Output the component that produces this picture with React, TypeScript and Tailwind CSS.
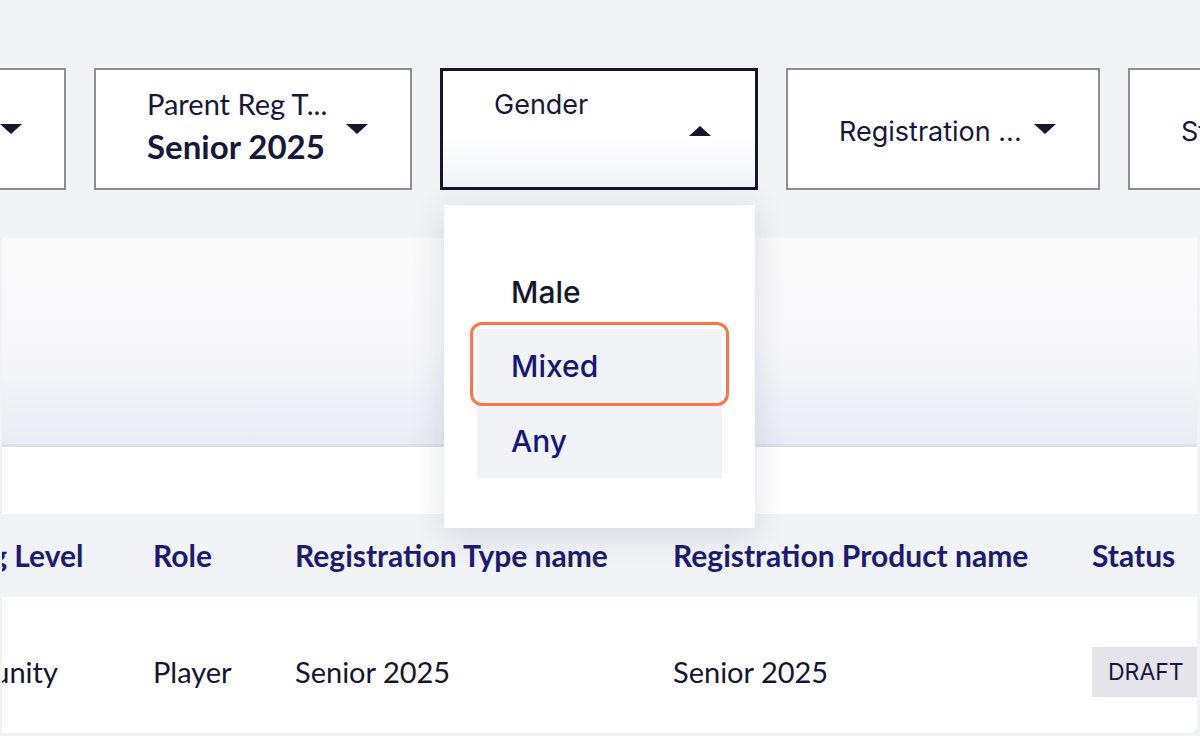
import React from "react";

const lato = { fontFamily: "Lato, 'Liberation Sans', sans-serif" };
const inter = { fontFamily: "Inter, 'Noto Sans', sans-serif" };

const Caret = ({ up = false }: { up?: boolean }) => (
  <svg width="24" height="11" viewBox="0 0 24 11" className="shrink-0">
    {up ? (
      <path d="M1 11 L12 1 L23 11 Z" fill="#15152e" />
    ) : (
      <path d="M1 0 L23 0 L12 10 Z" fill="#15152e" />
    )}
  </svg>
);

const FilterBox = ({
  label,
  value,
  w = "w-[318px]",
}: {
  label: string;
  value?: string;
  w?: string;
}) => (
  <div
    className={`${w} h-[122px] shrink-0 bg-white border-2 border-[#8c8e9a] flex items-center justify-between pl-[51px] pr-[41px]`}
  >
    {value ? (
      <div className="flex flex-col text-[#17173a] whitespace-nowrap" style={lato}>
        <span className="text-[29px] leading-[34px]">{label}</span>
        <span className="text-[33px] leading-[50px] font-bold">{value}</span>
      </div>
    ) : (
      <span className="text-[27px] text-[#17173a] whitespace-nowrap pt-[6px]" style={inter}>
        {label}
      </span>
    )}
    <Caret />
  </div>
);

const cols = "grid grid-cols-[243px_142px_378px_419px_1fr]";

const App = () => {
  return (
    <div className="relative w-[1200px] h-[736px] overflow-hidden bg-[#f2f3f5]">
      {/* Filters */}
      <div className="flex gap-[28px] pt-[68px] ml-[-252px]">
        <FilterBox label="Competition" value="Senior Comp" />
        <FilterBox label="Parent Reg T..." value="Senior 2025" />
        {/* Gender - open */}
        <div className="relative shrink-0">
          <div className="w-[318px] h-[122px] border-[3px] border-[#16162a] bg-gradient-to-b from-white via-white to-[#f3f4f8] flex justify-between pl-[51px] pr-[43px] pt-[17px]">
            <span className="text-[27px] leading-[34px] text-[#17173a]" style={inter}>
              Gender
            </span>
            <div className="pt-[37px]">
              <Caret up />
            </div>
          </div>
          {/* dropdown */}
          <div
            className="absolute z-10 left-[4px] top-[137px] w-[311px] bg-white px-[33px] py-[50px] shadow-[0_6px_30px_rgba(40,44,100,0.15)]"
            style={inter}
          >
            <div className="h-[74px] flex items-center pl-[34px] text-[30px] font-medium text-[#16162e]">Male</div>
            <div className="relative h-[75px] flex items-center pl-[34px] text-[30px] font-medium text-[#15157e] bg-[#f2f3f6]">
              Mixed
              <div className="absolute -inset-x-[7px] -top-[7px] -bottom-[2px] border-[3px] border-[#ff7446] rounded-[12px]" />
            </div>
            <div className="h-[74px] flex items-center pl-[34px] text-[30px] font-medium text-[#15157e] bg-[#f2f3f6]">Any</div>
          </div>
        </div>
        <FilterBox label="Registration ..." w="w-[314px]" />
        <FilterBox label="Status" />
      </div>

      {/* Card */}
      <div className="mt-[48px] ml-[2px] w-[1195px] bg-white rounded-br-[8px] overflow-hidden">
        <div className="h-[209px] bg-gradient-to-b from-[#fafafb] via-[#f8f8fa] to-[#eaecf5] border-b-[3px] border-[#dfe0e7]" />
        <div className="h-[67px] bg-white" />
        {/* table */}
        <div className="ml-[-92px]" style={lato}>
          <div className={`${cols} h-[83px] bg-[#f2f3f6] items-center text-[30px] font-bold text-[#1d1a72] whitespace-nowrap`}>
            <span>Playing Level</span>
            <span>Role</span>
            <span>Registration Type name</span>
            <span>Registration Product name</span>
            <span>Status</span>
          </div>
          <div className={`${cols} h-[136px] pt-[14px] items-center text-[29px] text-[#15152e] whitespace-nowrap`}>
            <span>Community</span>
            <span>Player</span>
            <span>Senior 2025</span>
            <span>Senior 2025</span>
            <span>
              <span
                className="inline-flex items-center h-[50px] pl-[16px] pr-[16px] bg-[#e4e4ea] text-[23px] text-[#17173a]"
                style={inter}
              >
                DRAFT
              </span>
            </span>
          </div>
        </div>
      </div>
    </div>
  );
};

export default App;
